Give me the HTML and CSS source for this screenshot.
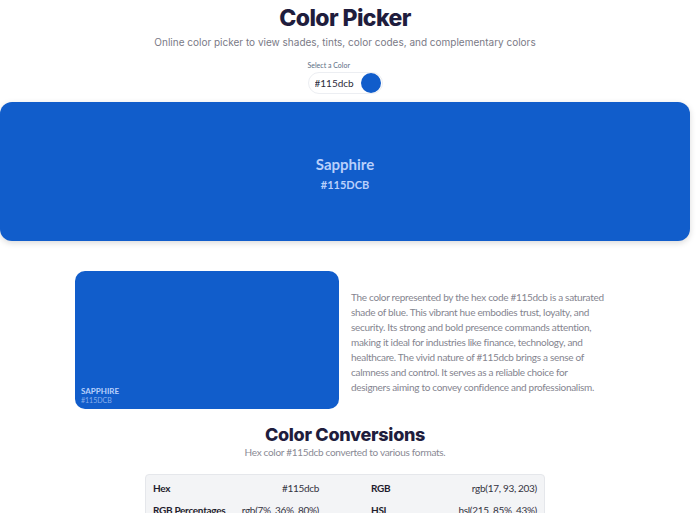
FILE: index.html
```html
<!DOCTYPE html>
<html lang="en">
<head>
    <meta charset="UTF-8">
    <meta name="viewport" content="width=device-width, initial-scale=1.0">
    <title>Color Picker</title>
    <link rel="stylesheet" href="styles.css">
</head>
<body>
    <div class="page">
        <header class="intro">
            <h1>Color Picker</h1>
            <p class="lead">Online color picker to view shades, tints, color codes, and complementary colors</p>
            <div class="picker">
                <label class="picker-label" for="hex">Select a Color</label>
                <div class="picker-field">
                    <input id="hex" type="text" value="#115dcb">
                    <span class="swatch"></span>
                </div>
            </div>
        </header>

        <section class="hero">
            <div class="hero-name">Sapphire</div>
            <div class="hero-code">#115DCB</div>
        </section>

        <section class="about">
            <div class="sample">
                <div class="sample-name">SAPPHIRE</div>
                <div class="sample-code">#115DCB</div>
            </div>
            <p class="about-text">The color represented by the hex code #115dcb is a saturated shade of blue. This vibrant hue embodies trust, loyalty, and security. Its strong and bold presence commands attention, making it ideal for industries like finance, technology, and healthcare. The vivid nature of #115dcb brings a sense of calmness and control. It serves as a reliable choice for designers aiming to convey confidence and professionalism.</p>
        </section>

        <section class="conversions">
            <h2>Color Conversions</h2>
            <p class="sub">Hex color #115dcb converted to various formats.</p>
            <div class="conv-table">
                <div class="conv-cell"><b>Hex</b><span>#115dcb</span></div>
                <div class="conv-cell"><b>RGB</b><span>rgb(17, 93, 203)</span></div>
                <div class="conv-cell"><b>RGB Percentages</b><span>rgb(7%, 36%, 80%)</span></div>
                <div class="conv-cell"><b>HSL</b><span>hsl(215, 85%, 43%)</span></div>
                <div class="conv-cell"><b>CMYK</b><span>cmyk(92, 54, 0, 20)</span></div>
                <div class="conv-cell"><b>HSV</b><span>hsv(215, 92%, 80%)</span></div>
            </div>
        </section>
    </div>
</body>
</html>
```

FILE: styles.css
```css
body {
    margin: 0;
    background: #fff;
    font-family: "Lato", sans-serif;
    -webkit-font-smoothing: antialiased;
}
.page {
    width: 690px;
}
.intro {
    text-align: center;
    padding-top: 5px;
}
h1 {
    margin: 0;
    font-family: "Inter", sans-serif;
    font-size: 23px;
    font-weight: 800;
    color: #1f1d3d;
    letter-spacing: -0.6px;
    line-height: 26px;
}
.lead {
    margin: 5px 0 0;
    font-family: "Inter", sans-serif;
    font-size: 10px;
    color: #7a7a86;
}
.picker {
    display: inline-flex;
    flex-direction: column;
    align-items: flex-start;
    margin-top: 13px;
}
.picker-label {
    font-size: 7px;
    color: #5b6d84;
    margin-bottom: 3px;
}
.picker-field {
    display: flex;
    align-items: center;
    width: 75px;
    height: 22px;
    border: 1px solid #eceef2;
    border-radius: 11px;
    box-sizing: border-box;
    padding: 0 1px 0 6px;
}
.picker-field input {
    width: 46px;
    border: none;
    padding: 0;
    font-family: "Lato", sans-serif;
    font-size: 10px;
    color: #2b2b3a;
    outline: none;
}
.swatch {
    margin-left: auto;
    width: 20px;
    height: 20px;
    border-radius: 50%;
    background: #115dcb;
}
.hero {
    margin-top: 8px;
    height: 139px;
    background: #115dcb;
    border-radius: 12px;
    box-shadow: 0 2px 6px rgba(0, 0, 0, 0.15);
    display: flex;
    flex-direction: column;
    align-items: center;
    justify-content: center;
    color: #b9d0fb;
    font-weight: 700;
    padding-top: 3px;
    box-sizing: border-box;
}
.hero-name {
    font-size: 15px;
}
.hero-code {
    font-size: 11px;
    margin-top: 5px;
}
.about {
    display: grid;
    grid-template-columns: 264px 256px;
    gap: 12px;
    align-items: center;
    margin: 30px 0 0 75px;
}
.sample {
    height: 138px;
    background: #115dcb;
    border-radius: 10px;
    display: flex;
    flex-direction: column;
    justify-content: flex-end;
    padding: 0 6px 5px;
    box-sizing: border-box;
    color: #b9d0fb;
}
.sample-name {
    font-size: 8px;
    font-weight: 700;
}
.sample-code {
    font-size: 7px;
    opacity: 0.7;
}
.about-text {
    margin: 4px 0 0;
    font-size: 10px;
    letter-spacing: -0.3px;
    line-height: 15px;
    color: #85858f;
}
.conversions {
    text-align: center;
    margin-top: 15px;
}
h2 {
    margin: 0;
    font-family: "Inter", sans-serif;
    font-size: 18px;
    font-weight: 800;
    color: #1f1d3d;
    letter-spacing: -0.3px;
}
.sub {
    margin: 1px 0 0;
    font-size: 10px;
    letter-spacing: -0.3px;
    color: #8a8a94;
}
.conv-table {
    width: 400px;
    margin: 16px auto 0;
    box-sizing: border-box;
    background: #f3f4f6;
    border: 1px solid #e5e7eb;
    border-radius: 4px;
    padding: 2px 7px;
    display: grid;
    grid-template-columns: 1fr 1fr;
    column-gap: 52px;
    text-align: left;
}
.conv-cell {
    display: flex;
    justify-content: space-between;
    height: 22px;
    align-items: center;
    font-size: 10px;
    letter-spacing: -0.3px;
    color: #33333f;
}
.conv-cell b {
    color: #1f1d2d;
}
```
